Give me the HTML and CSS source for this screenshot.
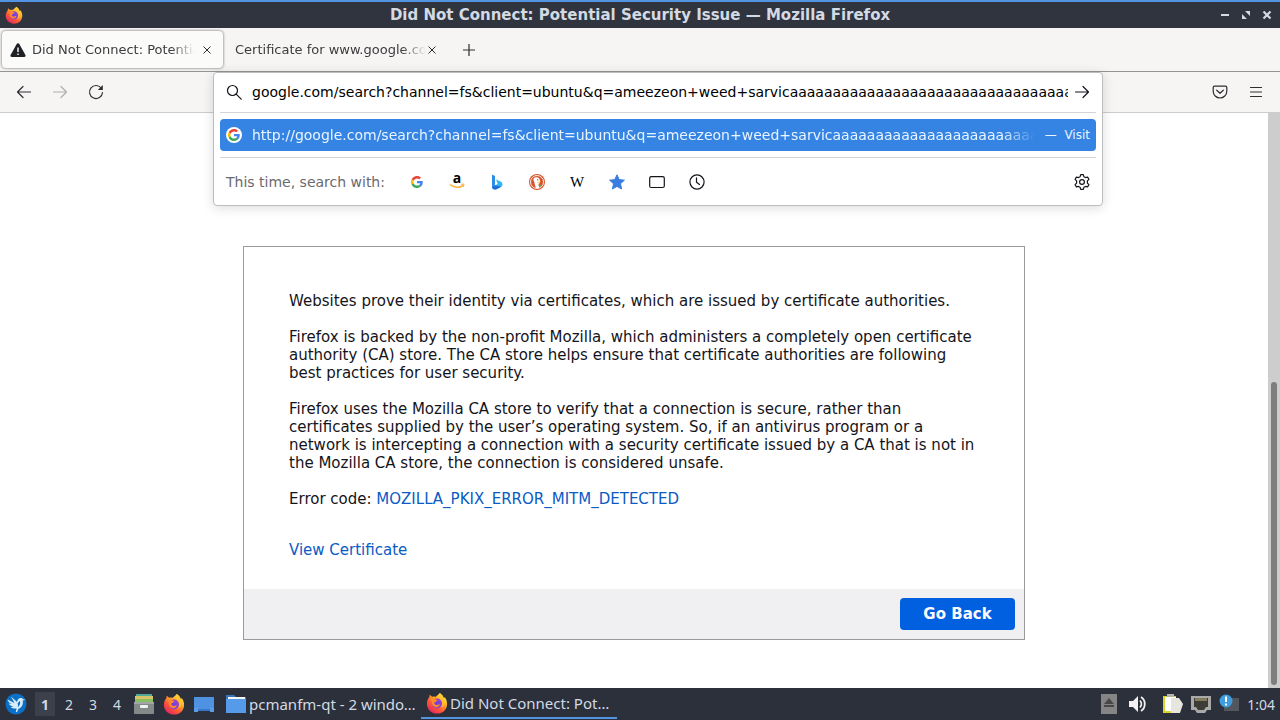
FILE: index.html
```html
<!DOCTYPE html>
<html lang="en">
<head>
  <meta charset="UTF-8">
  <title>Did Not Connect: Potential Security Issue</title>
  <link rel="stylesheet" href="styles.css">
</head>
<body>
  <svg class="sprite" aria-hidden="true">
    <defs>
      <linearGradient id="fx-flame" x1="0.85" y1="0.05" x2="0.2" y2="0.95">
        <stop offset="0" stop-color="#fff04a"/>
        <stop offset="0.35" stop-color="#ffab24"/>
        <stop offset="0.65" stop-color="#ff5a36"/>
        <stop offset="1" stop-color="#e4255f"/>
      </linearGradient>
      <radialGradient id="fx-globe">
        <stop offset="0" stop-color="#6f3fe0"/>
        <stop offset="1" stop-color="#9a43c8"/>
      </radialGradient>
      <symbol id="firefox" viewBox="0 0 24 24">
        <path fill="url(#fx-flame)" d="M15 1c3 2 4 4 4.500 6l1-1.500c1.700 2.300 2.700 5 2.500 8C22.600 19.500 18 23.500 12 23.500S1 19 1 13c0-3 1-5.500 2.700-7.500L4 3l2.800 2.200c1.500-.4 2.700-.3 3.700.2C11.500 4 13.500 3 15 1z"/>
        <circle cx="12" cy="12.500" r="5.500" fill="url(#fx-globe)"/>
        <path fill="#ff8a2b" d="M4.500 8c2-1.500 4-1.200 5.500-.2 1.200.2 2 .5 2.500 1.400-.8 1-2.300 1.200-3.200 2.100-.8.900.1 2.700 1.600 2.900 1.800.3 2.700-1.400 4.100-.7-.7 2.500-3.500 3.600-5.700 2.700C6.500 15 6 12 6.500 10z"/>
        <path fill="#ffc52e" d="M15 1c-1 3 .5 4.500 2 6.500 2 3 1.500 7-1.200 9.300 4-1 5.900-5.600 3.700-9.800C19 4.500 17 2 15 1z"/>
      </symbol>
      <symbol id="google" viewBox="0 0 48 48">
        <path fill="#ea4335" d="M24 9.500c3.540 0 6.710 1.220 9.210 3.600l6.850-6.850C35.900 2.380 30.470 0 24 0 14.620 0 6.510 5.380 2.560 13.220l7.980 6.190C12.430 13.720 17.740 9.500 24 9.500z"/>
        <path fill="#4285f4" d="M46.980 24.550c0-1.570-.15-3.090-.38-4.550H24v9.020h12.940c-.58 2.960-2.260 5.480-4.780 7.180l7.730 6c4.510-4.180 7.090-10.360 7.090-17.650z"/>
        <path fill="#fbbc05" d="M10.530 28.590A14.500 14.500 0 0 1 10.530 19.410l-7.980-6.190a24 24 0 0 0 0 21.560z"/>
        <path fill="#34a853" d="M24 48c6.480 0 11.930-2.130 15.890-5.810l-7.730-6c-2.150 1.450-4.920 2.300-8.160 2.300-6.260 0-11.570-4.220-13.470-9.910l-7.980 6.190C6.510 42.620 14.620 48 24 48z"/>
      </symbol>
    </defs>
  </svg>

  <header class="titlebar">
    <svg class="titlebar-logo"><use href="#firefox"/></svg>
    <h1 class="titlebar-text">Did Not Connect: Potential Security Issue — Mozilla Firefox</h1>
    <div class="window-buttons">
      <button aria-label="Minimize"><svg viewBox="0 0 10 10"><path d="M1 5h8" stroke="#d3dae3" stroke-width="2"/></svg></button>
      <button aria-label="Restore"><svg viewBox="0 0 10 10" fill="#d3dae3"><path d="M4 1h5v5zM1 4l5 5H1z"/></svg></button>
      <button aria-label="Close"><svg viewBox="0 0 10 10"><path d="M1.500 1.500l7 7M8.500 1.500l-7 7" stroke="#d3dae3" stroke-width="2.200"/></svg></button>
    </div>
  </header>

  <nav class="tabs" aria-label="Tabs">
    <div class="tab tab-active">
      <svg class="icon" viewBox="0 0 16 16"><path d="M8 1.200c.6 0 1 .3 1.300.8l6.100 11c.5 1-.1 2-1.200 2H1.800C.7 15 .1 14 .6 13L6.700 2c.3-.5.700-.8 1.300-.8z" fill="#1f2125"/><path d="M8 5.500v4.500M8 11.500v1.500" stroke="#fff" stroke-width="1.400"/></svg>
      <span class="tab-label">Did Not Connect: Potential Security Issue</span>
      <button class="tab-close" aria-label="Close tab"><svg viewBox="0 0 8 8"><path d="M.5.500l7 7M7.500.500l-7 7"/></svg></button>
    </div>
    <div class="tab">
      <span class="tab-label">Certificate for www.google.com</span>
      <button class="tab-close" aria-label="Close tab"><svg viewBox="0 0 8 8"><path d="M.5.500l7 7M7.500.500l-7 7"/></svg></button>
    </div>
    <button class="tab-new" aria-label="New tab"><svg viewBox="0 0 12 12"><path d="M6 0v12M0 6h12"/></svg></button>
  </nav>

  <div class="toolbar">
    <div class="nav-buttons">
      <button aria-label="Back"><svg class="icon line" viewBox="0 0 16 16"><path d="M14.500 8H1.500M7 2.500L1.500 8 7 13.500"/></svg></button>
      <button aria-label="Forward" disabled><svg class="icon line" viewBox="0 0 16 16"><path d="M1.500 8h13M9 2.500l5.500 5.500L9 13.500"/></svg></button>
      <button aria-label="Reload"><svg class="icon line" viewBox="0 0 16 16"><path d="M13.500 4.500A6.500 6.500 0 1 0 14.500 8.500"/><path d="M14.800 1v5H9.800z" fill="#2e2e32" stroke="none"/></svg></button>
    </div>

    <div class="urlbar">
      <div class="urlbar-popup">
        <div class="urlbar-row">
          <svg class="icon line dark" viewBox="0 0 16 16"><circle cx="6.500" cy="6.500" r="5"/><path d="M10.200 10.200l5 5"/></svg>
          <input class="urlbar-input" type="text" aria-label="Address" value="google.com/search?channel=fs&amp;client=ubuntu&amp;q=ameezeon+weed+sarvicaaaaaaaaaaaaaaaaaaaaaaaaaaaaaaaaaaaaaaaaaaaaaaaa">
          <button aria-label="Go"><svg class="icon line dark" viewBox="0 0 16 16"><path d="M1.500 8h13M9 2.500L14.500 8 9 13.500"/></svg></button>
        </div>
        <a class="result" href="#">
          <span class="favicon"><svg><use href="#google"/></svg></span>
          <span class="result-url">http://google.com/search?channel=fs&amp;client=ubuntu&amp;q=ameezeon+weed+sarvicaaaaaaaaaaaaaaaaaaaaaaaa</span>
          <span class="result-action">—&nbsp; Visit</span>
        </a>
        <div class="engines">
          <span class="engines-label">This time, search with:</span>
          <button aria-label="Google"><svg class="google-small"><use href="#google"/></svg></button>
          <button aria-label="Amazon"><svg class="icon" viewBox="0 0 16 16"><text x="8" y="9" class="amazon-a">a</text><path d="M1 10.500c4 3.500 9.500 3.700 13 .8" fill="none" stroke="#f9b233" stroke-width="1.600"/><path d="M12 10.300l3-.3-.7 3" fill="none" stroke="#f9b233"/></svg></button>
          <button aria-label="Bing"><svg class="icon" viewBox="0 0 16 16"><path d="M3 .5l3 1.500v9L3 13.500z" fill="#2d8ee8"/><path d="M7 5.500l4.500 2c2.400 1.100 2.600 4 .7 5.300L7.500 15.300C5.500 16.200 3 15 3 13l5.700-2.900z" fill="#2fb6ee"/><path d="M3 12.800l3-1.600 6.200 1.600-4.700 2.500C5.500 16.200 3 15 3 12.800z" fill="#1f6fd8"/></svg></button>
          <button aria-label="DuckDuckGo"><svg class="icon" viewBox="0 0 16 16"><circle cx="8" cy="8" r="8" fill="#d9532c"/><circle cx="8" cy="8" r="6.500" fill="#d9532c" stroke="#fff" stroke-width=".9"/><path d="M4.800 4.200C6 2.800 9.200 2.900 10.400 4.800c.8 1.400.6 2.700.6 4l-1.500 1.200.9 3.800c-1.200.5-2.500.6-3.600.1L5.200 8C4.600 6.500 4.200 5.200 4.800 4.200z" fill="#fff"/><circle cx="8.800" cy="5.800" r=".6" fill="#333"/><path d="M8.500 8c1.200-.7 2.600-.7 3.600-.4-.8.9-2.100 1.300-3.600 1.500z" fill="#f8bd28"/><path d="M9 11.500l2.600-.7v2.300z" fill="#5fb043"/></svg></button>
          <button aria-label="Wikipedia"><svg class="icon" viewBox="0 0 16 16"><text x="8" y="13" class="wiki-w">W</text></svg></button>
          <button aria-label="Bookmarks"><svg class="icon" viewBox="0 0 16 16"><path d="M8 .8l2.200 4.800 5.200.6-3.900 3.500 1.100 5.300L8 12.400 3.400 15l1.100-5.300L.6 6.200l5.200-.6z" fill="#3a7de0" stroke="#3a7de0" stroke-linejoin="round"/></svg></button>
          <button aria-label="Tabs"><svg class="icon line dark" viewBox="0 0 16 16"><rect x=".700" y="2.700" width="14.600" height="10.800" rx="1.500"/></svg></button>
          <button aria-label="History"><svg class="icon line dark" viewBox="0 0 16 16"><circle cx="8" cy="8" r="7.100"/><path d="M7.500 3.800v4.400l3 2.300"/></svg></button>
          <button class="engines-settings" aria-label="Search settings"><svg class="icon line dark" viewBox="0 0 16 16"><path d="M6.700.7h2.600l.6 2 1.600.9 2.100-.5 1.300 2.200-1.500 1.600v2.200l1.500 1.600-1.300 2.200-2.100-.5-1.600.9-.6 2H6.700l-.6-2-1.600-.9-2.100.5-1.300-2.200 1.500-1.600V6.900L1.100 5.300l1.300-2.200 2.100.5 1.600-.9z"/><circle cx="8" cy="8" r="2.400"/></svg></button>
        </div>
      </div>
    </div>

    <div class="toolbar-end">
      <button aria-label="Save to Pocket"><svg class="icon line" viewBox="0 0 16 16"><path d="M2.500 2.200h11c.8 0 1.300.5 1.300 1.300v3.700a6.800 6.800 0 0 1-13.600 0V3.500c0-.8.500-1.300 1.300-1.300zM4.700 6.200L8 9.300l3.300-3.100"/></svg></button>
      <button aria-label="Menu"><svg class="icon line" viewBox="0 0 16 16"><path d="M2.500 3.500h11M2.500 8h11M2.500 12.500h11"/></svg></button>
    </div>
  </div>

  <main class="page">
    <div class="page-body">
      <section class="error-card">
        <div class="error-text">
          <p>Websites prove their identity via certificates, which are issued by certificate authorities.</p>
          <p>Firefox is backed by the non-profit Mozilla, which administers a completely open certificate authority (CA) store. The CA store helps ensure that certificate authorities are following best practices for user security.</p>
          <p>Firefox uses the Mozilla CA store to verify that a connection is secure, rather than certificates supplied by the user’s operating system. So, if an antivirus program or a network is intercepting a connection with a security certificate issued by a CA that is not in the Mozilla CA store, the connection is considered unsafe.</p>
          <p>Error code: <a href="#">MOZILLA_PKIX_ERROR_MITM_DETECTED</a></p>
          <p class="view-cert"><a href="#">View Certificate</a></p>
        </div>
        <div class="error-actions">
          <button class="go-back">Go Back</button>
        </div>
      </section>
    </div>
    <div class="scrollbar"><div class="scrollbar-thumb"></div></div>
  </main>

  <footer class="taskbar">
    <button class="launcher" aria-label="Menu"><svg viewBox="0 0 22 22"><circle cx="11" cy="11" r="10.500" fill="#0b6fc6"/><path d="M2.500 6.500l7 3.500-3.500-6.500 6 5.500c.5-2.700 2-4.200 4-4 1 .1 1.600.5 2 1.200l2.500.6-2.800.6c.8 3.500-.7 7.200-4.200 8.300l-1.500 3.500-1.200-.5.8-3.200c-2.500.3-4.500-.2-6-1.500l3-.6c-2.500-.5-4.200-1.500-5-3l3.500.6C4.500 10 3 8.500 2.500 6.500z" fill="#d9edfb"/><path d="M12.500 10.500c.8 1.200.8 2.500 0 3.700 2-1 3.200-3.500 2.500-6.500z" fill="#0b6fc6"/></svg></button>
    <div class="desktops">
      <button class="current">1</button>
      <button>2</button>
      <button>3</button>
      <button>4</button>
    </div>
    <div class="quick">
      <button aria-label="Files"><svg viewBox="0 0 22 22"><path d="M3 1h16v5H3z" fill="#4fa79c"/><path d="M2 3h18v5H2z" fill="#d9c267"/><path d="M2 6h18v4H2z" fill="#8abf62"/><rect x="1" y="9" width="20" height="12" rx="1" fill="#84898a"/><path d="M1 9h20v2H1z" fill="#a2a6a6"/><rect x="7" y="12" width="8" height="3" rx="1" fill="#f1f1f1"/></svg></button>
      <button aria-label="Firefox"><svg><use href="#firefox"/></svg></button>
      <button aria-label="Show desktop"><svg viewBox="0 0 22 22"><path d="M1 4h20v13H1z" fill="#4f92e2"/><path d="M1 15h4v4H1zM17 15h4v4h-4z" fill="#5a9ce8"/><path d="M5 16h12v2H5z" fill="#3877c8"/></svg></button>
    </div>
    <button class="task">
      <svg viewBox="0 0 22 22"><path d="M1 2h8l2 2h10v5H1z" fill="#3b76bd"/><path d="M3 4h17v4H3z" fill="#f4f6f8"/><path d="M1 6h20v14H1z" fill="#569be9"/></svg>
      <span>pcmanfm-qt - 2 windows</span>
    </button>
    <button class="task task-active">
      <svg><use href="#firefox"/></svg>
      <span>Did Not Connect: Potential Security Issue</span>
    </button>
    <div class="tray">
      <svg viewBox="0 0 20 20"><rect x="2" width="16" height="20" fill="#858585"/><path d="M10 4l5 6H5zM5 11h10v2H5z" fill="#484848"/></svg>
      <svg viewBox="0 0 20 20"><path d="M2 7h4l5-5v16l-5-5H2z" fill="#f2f2f2"/><path d="M13 6.500c1.800 2 1.800 5 0 7M14 3c5 3 5 11 0 14" fill="none" stroke="#f2f2f2" stroke-width="1.800"/></svg>
      <svg class="clipboard" viewBox="0 0 20 20"><path d="M0 2h13v17H0z" fill="#d7d52d"/><path d="M2 3h11v14H2z" fill="#fff"/><path d="M8 4h8l4 6-3 9H8z" fill="#e6e6df"/><path d="M4 0h7v3H4z" fill="#b5b5ad"/></svg>
      <svg viewBox="0 0 20 20"><path d="M0 2h20v14h-4l-2 3H6l-2-3H0z" fill="#a9a9a9"/><path d="M3 4h14v9h-2l-2 3H7l-2-3H3z" fill="#3d3c36"/><path d="M5 4v3M7 4v3M9 4v3M11 4v3M13 4v3M15 4v3" stroke="#cbbd84"/></svg>
      <svg viewBox="0 0 20 20"><path d="M5 4h15v13H5z" fill="#53565d"/><circle cx="7" cy="7" r="6.500" fill="#3f9ddd"/><path d="M7 2.500v5.500M7 9.500v2" stroke="#fff" stroke-width="2"/></svg>
      <time class="clock">1:04</time>
    </div>
  </footer>
</body>
</html>
```

FILE: styles.css
```css
* {
  box-sizing: border-box;
}

body {
  margin: 0;
  height: 100vh;
  display: flex;
  flex-direction: column;
  overflow: hidden;
  font-family: "DejaVu Sans", sans-serif;
  font-size: 14px;
  color: #15141a;
  background: #fff;
}

button {
  display: flex;
  align-items: center;
  justify-content: center;
  padding: 0;
  border: none;
  background: none;
  color: inherit;
  font: inherit;
  cursor: pointer;
}

a {
  color: #0a5bc4;
  text-decoration: none;
}

.sprite {
  position: absolute;
  width: 0;
  height: 0;
}

.icon {
  width: 16px;
  height: 16px;
  flex-shrink: 0;
}

.line {
  fill: none;
  stroke: #2e2e32;
  stroke-width: 1.2;
  stroke-linecap: round;
  stroke-linejoin: round;
}

.dark {
  stroke: #15141a;
}

/* Window title */
.titlebar {
  display: flex;
  align-items: center;
  height: 28px;
  padding: 0 6px 0 5px;
  background: #2f343f;
  border-top: 2px solid #5294e2;
  color: #d3dae3;
}

.titlebar-logo {
  width: 18px;
  height: 18px;
}

.titlebar-text {
  flex: 1;
  margin: 0;
  padding-left: 40px;
  text-align: center;
  font-size: 15px;
  line-height: 18px;
}

.window-buttons {
  display: flex;
  gap: 6px;
}

.window-buttons button {
  width: 15px;
  height: 20px;
}

.window-buttons svg {
  width: 10px;
  height: 10px;
}

/* Tabs */
.tabs {
  display: flex;
  align-items: center;
  height: 44px;
  padding: 0 2px;
  background: #f6f5f4;
  border-bottom: 1px solid #949494;
}

.tab {
  display: flex;
  align-items: center;
  width: 225px;
  height: 37px;
  padding: 0 10px 0 12px;
  color: #3c3c3f;
}

.tab-active {
  width: 221px;
  padding: 0 10px 0 8px;
  gap: 6px;
  background: #fbfbfa;
  border-radius: 4px;
  box-shadow: 0 0 3px rgba(0, 0, 0, 0.6);
}

.tab-label {
  flex: 1;
  overflow: hidden;
  white-space: nowrap;
  font-size: 13px;
  line-height: 20px;
  mask-image: linear-gradient(to left, transparent, #000 24px);
}

.tab-close {
  width: 12px;
  height: 20px;
}

.tab-close svg {
  width: 8px;
  height: 8px;
  stroke: #2e2e32;
}

.tab-new {
  width: 42px;
  height: 32px;
}

.tab-new svg {
  width: 12px;
  height: 12px;
  stroke: #2e2e32;
  stroke-width: 1.2;
}

/* Navigation */
.toolbar {
  display: flex;
  align-items: center;
  height: 41px;
  padding: 0 6px;
  background: #f6f5f4;
  border-bottom: 1px solid #ccc;
}

.nav-buttons {
  display: flex;
  width: 207px;
}

.nav-buttons button,
.toolbar-end button {
  width: 36px;
  height: 32px;
}

.nav-buttons button:disabled {
  opacity: 0.35;
}

.toolbar-end {
  display: flex;
  justify-content: flex-end;
  width: 171px;
}

.urlbar {
  position: relative;
  flex: 1;
  align-self: stretch;
}

.urlbar-popup {
  position: absolute;
  z-index: 1;
  top: 0;
  left: 0;
  right: 0;
  padding: 0 6px;
  background: #fff;
  border: 1px solid #bdbdbd;
  border-radius: 4px;
  box-shadow: 0 2px 12px rgba(0, 0, 0, 0.14);
}

.urlbar-row {
  display: flex;
  align-items: center;
  gap: 10px;
  height: 40px;
  padding: 0 6px 2px;
  border-bottom: 1px solid #d4d4d4;
}

.urlbar-input {
  flex: 1;
  min-width: 0;
  height: 30px;
  padding: 0;
  border: none;
  outline: none;
  background: none;
  color: #000;
  font: inherit;
}

.urlbar-row button {
  margin-left: -4px;
}

.result {
  display: flex;
  align-items: center;
  gap: 10px;
  height: 32px;
  margin: 6px 0;
  padding: 0 6px;
  border-radius: 4px;
  background: #3584e4;
  color: #e8f4ff;
}

.favicon {
  display: flex;
  align-items: center;
  justify-content: center;
  width: 16px;
  height: 16px;
  border-radius: 50%;
  background: #fff;
}

.favicon svg,
.google-small {
  width: 12px;
  height: 12px;
}

.result-url {
  flex: 1;
  overflow: hidden;
  white-space: nowrap;
  mask-image: linear-gradient(to left, transparent, #000 32px);
}

.result-action {
  font-size: 12px;
  white-space: nowrap;
}

.engines {
  display: flex;
  align-items: center;
  height: 48px;
  border-top: 1px solid #d4d4d4;
}

.engines-label {
  padding: 0 12px 0 6px;
  color: #6a6a6f;
}

.engines button {
  width: 40px;
  height: 32px;
}

.engines .engines-settings {
  width: 28px;
  margin-left: auto;
}

.amazon-a {
  font: bold 14px "Open Sans", sans-serif;
  text-anchor: middle;
}

.wiki-w {
  font: 15px "Liberation Serif", serif;
  text-anchor: middle;
}

/* Error page */
.page {
  flex: 1;
  display: flex;
  min-height: 0;
}

.page-body {
  flex: 1;
  display: flex;
  align-items: flex-end;
  justify-content: center;
  padding: 0 24px 48px;
}

.error-card {
  width: 100%;
  max-width: 782px;
  border: 1px solid #9a9a9e;
  font-size: 15px;
  line-height: 18px;
}

.error-text {
  padding: 45px 45px 30px;
}

.error-text p {
  margin: 0 0 18px;
}

.error-text .view-cert {
  margin: 33px 0 0;
}

.error-actions {
  display: flex;
  justify-content: flex-end;
  padding: 9px;
  background: #f0f0f3;
}

.go-back {
  height: 32px;
  min-width: 115px;
  padding: 0 20px;
  border-radius: 4px;
  background: #0060df;
  color: #fbfbfe;
  font-weight: bold;
}

.scrollbar {
  display: flex;
  align-items: flex-end;
  justify-content: center;
  width: 12px;
  padding-bottom: 3px;
  background: #cdcdcd;
}

.scrollbar-thumb {
  width: 6px;
  height: 53%;
  border-radius: 3px;
  background: #7c7f7e;
}

/* Desktop panel */
.taskbar {
  display: flex;
  align-items: center;
  height: 32px;
  padding: 0 5px;
  background: #2b303b;
  color: #d3dae3;
  font-family: "Noto Sans", sans-serif;
}

.launcher svg,
.quick svg,
.task svg {
  width: 22px;
  height: 22px;
  flex-shrink: 0;
}

.desktops {
  display: flex;
  gap: 4px;
  margin-left: 8px;
}

.desktops button {
  width: 20px;
  height: 24px;
}

.desktops .current {
  background: #3b404b;
  font-weight: bold;
}

.quick {
  display: flex;
  gap: 8px;
  margin-left: 6px;
}

.task {
  justify-content: flex-start;
  gap: 2px;
  width: 196px;
  height: 30px;
  margin-left: 10px;
  padding-right: 4px;
  font-size: 15px;
}

.task span {
  overflow: hidden;
  text-overflow: ellipsis;
  white-space: nowrap;
}

.task-active {
  margin-left: 0;
  padding-left: 5px;
  border-bottom: 2px solid #5294e2;
}

.tray {
  display: flex;
  align-items: center;
  gap: 8px;
  margin-left: auto;
}

.tray svg {
  width: 20px;
  height: 20px;
}

.tray .clipboard {
  margin-left: 8px;
}
```
